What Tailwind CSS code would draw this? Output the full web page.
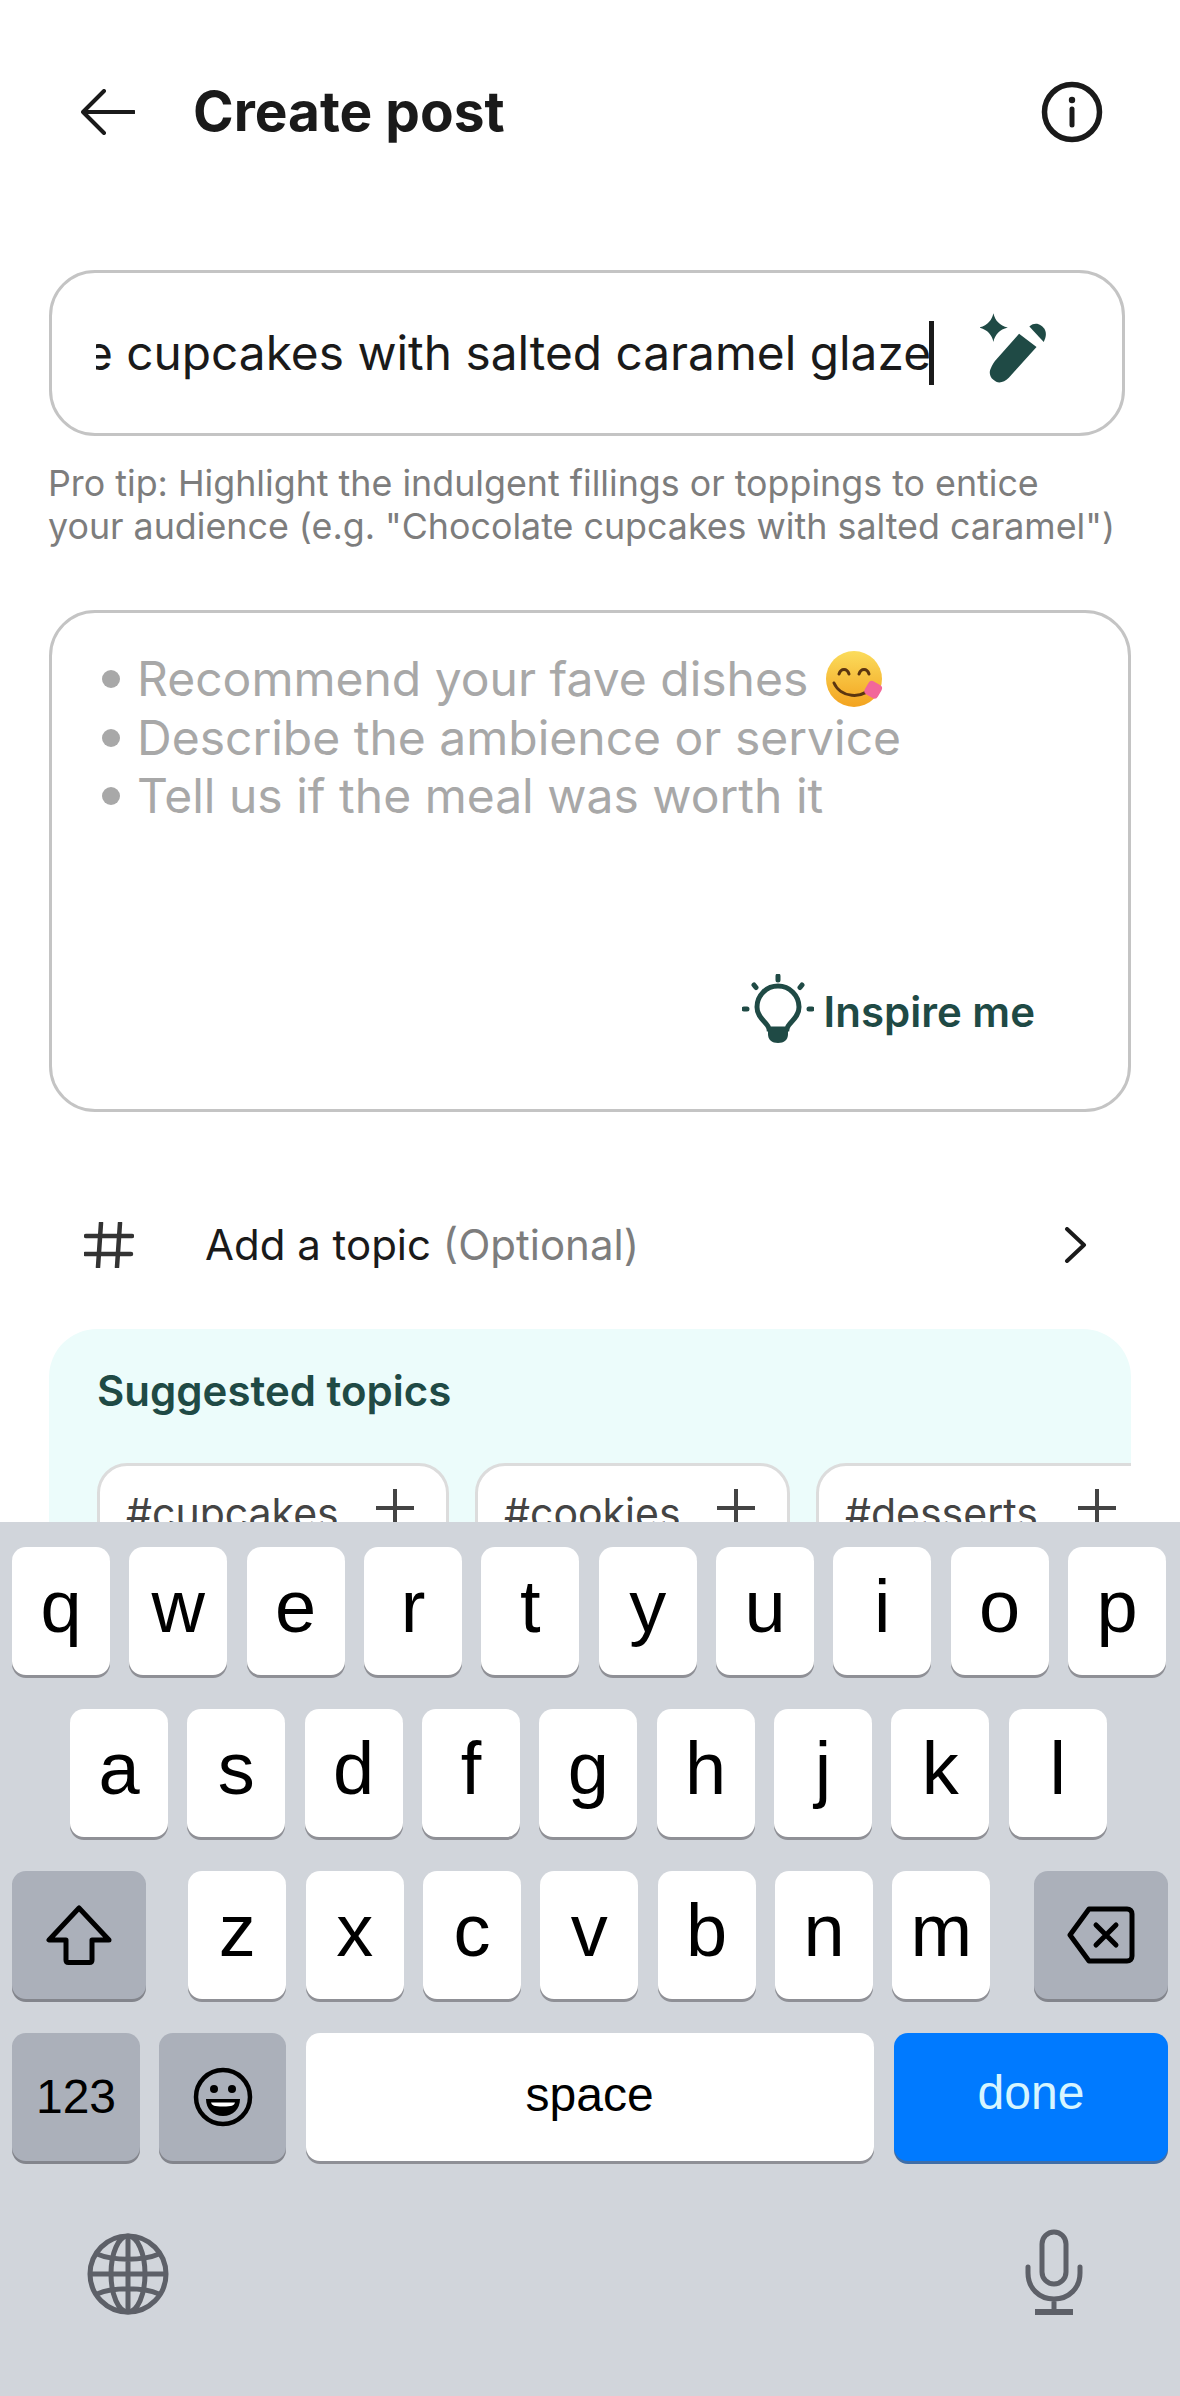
<!DOCTYPE html>
<html lang="en">
<head>
  <meta charset="UTF-8">
  <title>Create post</title>
  <script src="https://cdn.jsdelivr.net/npm/@tailwindcss/browser@4"></script>
</head>
<body class="bg-white font-['Inter',sans-serif]">
  <div class="w-[1180px] h-[2396px] flex flex-col overflow-hidden">
    <!-- page -->
    <div class="h-[1522px] overflow-hidden shrink-0">
      <header class="h-[225px] pl-[81px] pr-[77px] pb-[1px] flex items-center">
        <svg class="w-[54px] h-[46px]" viewBox="0 0 54 46" fill="none" stroke="#1a1a1a" stroke-width="4" stroke-linecap="round" stroke-linejoin="round"><path d="M53 23H2M23 2 2 23l21 21"/></svg>
        <h1 class="ml-[58px] mb-[3px] text-[55px] leading-[60px] font-bold text-[#1a1a1a]">Create post</h1>
        <svg class="ml-auto w-[62px] h-[62px]" viewBox="0 0 62 62" fill="none" stroke="#1a1a1a"><circle cx="31" cy="31" r="27.5" stroke-width="5.5"/><path d="M31 28v16" stroke-width="5" stroke-linecap="round"/><circle cx="31" cy="19" r="3.2" fill="#1a1a1a" stroke="none"/></svg>
      </header>

      <div class="mx-[49px] w-[1076px] h-[166px] mt-[45px] border-[3px] border-[#c4c4c4] rounded-[46px] pl-[44px] flex items-center">
        <div class="w-[835px] flex justify-end overflow-hidden whitespace-nowrap text-[47.800px] leading-[60px] text-[#1a1a1a]">Chocolate cupcakes with salted caramel glaze</div>
        <span class="w-[5px] h-[64px] bg-[#1a1a1a] -ml-[2px]"></span>
        <svg class="ml-[46px] w-[72px] h-[77px] mt-[-14px]" viewBox="0 0 70 75" fill="#1f4a45"><path d="M13 5c1.500 7 6 12 14 14-8 2-12.500 7-14 14-1.500-7-6-12-14-14 8-2 12.500-7 14-14Z"/><path d="M48 18c6-5 12-2 15 3 2 4 1 8-1 12Z"/><path d="M38 25 55 38 28 68c-5 5-11 6-15 2-4-3-4-8-3-10 2-5 4-8 6-10Z"/></svg>
      </div>

      <p class="ml-[48px] mt-[26px] w-[1100px] text-[35.800px] leading-[43px] text-[#7d7d7d]">Pro tip: Highlight the indulgent fillings or toppings to entice<br>your audience (e.g. "Chocolate cupcakes with salted caramel")</p>

      <div class="ml-[49px] mt-[62px] w-[1082px] h-[502px] border-[3px] border-[#c4c4c4] rounded-[46px] pl-[50px] pr-[93px] pt-[36px] flex flex-col">
        <ul class="text-[48px] leading-[58px] text-[#a8a8a8]">
          <li class="flex items-center gap-[17px]"><span class="w-[18px] h-[18px] rounded-full bg-[#a8a8a8]"></span>Recommend your fave dishes
            <svg class="ml-[-1px] w-[60px] h-[60px]" viewBox="0 0 60 60"><defs><linearGradient id="face" x1="0" y1="0" x2="0" y2="1"><stop offset="0" stop-color="#fbdc5c"/><stop offset="1" stop-color="#f3a31f"/></linearGradient></defs><circle cx="30" cy="30" r="28" fill="url(#face)"/><path d="M15 25c2-6 8-6 10 0M35 25c2-6 8-6 10 0M10 34c6 14 28 18 40 2" fill="none" stroke="#5b3510" stroke-width="3" stroke-linecap="round"/><rect x="42" y="33" width="15" height="15" rx="4" transform="rotate(30 49 40)" fill="#f2679a"/></svg>
          </li>
          <li class="flex items-center gap-[17px]"><span class="w-[18px] h-[18px] rounded-full bg-[#a8a8a8]"></span>Describe the ambience or service</li>
          <li class="flex items-center gap-[17px]"><span class="w-[18px] h-[18px] rounded-full bg-[#a8a8a8]"></span>Tell us if the meal was worth it</li>
        </ul>
        <div class="mt-auto mb-[63px] self-end flex items-center gap-[10px] text-[42px] leading-[50px] font-semibold text-[#1f4a45]">
          <svg class="w-[72px] h-[72px] -mt-[4px]" viewBox="0 0 72 72" fill="none" stroke="#1f4a45" stroke-linecap="round"><path d="M27 55c-1-7-12-10-12-22a21 21 0 0 1 42 0c0 12-11 15-12 22Z" stroke-width="5"/><path d="M26 54h20v6c0 6-4 9-10 9s-10-3-10-9Z" fill="#1f4a45" stroke="none"/><path d="M36 2v4M12 11l2 2.500M60 11l-2 2.500M2 35h3M67 35h3" stroke-width="5"/></svg>
          Inspire me
        </div>
      </div>

      <div class="h-[217px] pl-[84px] pr-[93px] pt-[48px] flex items-center text-[42px] text-[#1a1a1a]">
        <svg class="w-[50px] h-[46px]" viewBox="0 0 50 46" fill="none" stroke="#333" stroke-width="4.500" stroke-linecap="round"><path d="M2 14h46M1 32h46M17 1l-3 44M36 1l-3 44"/></svg>
        <span class="ml-[71px]">Add a topic <span class="text-[#7d7d7d]">(Optional)</span></span>
        <svg class="ml-auto w-[24px] h-[36px]" viewBox="0 0 24 36" fill="none" stroke="#1a1a1a" stroke-width="4" stroke-linecap="round" stroke-linejoin="round"><path d="m4 2 17 16L4 34"/></svg>
      </div>

      <section class="ml-[49px] w-[1082px] h-[400px] bg-[#ecfcfb] rounded-[48px] pl-[48px] pt-[36px] overflow-hidden">
        <h2 class="text-[42px] leading-[52px] font-semibold text-[#1f4a45]">Suggested topics</h2>
        <div class="mt-[46px] flex gap-[26px] text-[41px] leading-[50px] text-[#444]">
          <div class="w-[352px] h-[120px] shrink-0 bg-white border-[3px] border-[#dcdcdc] rounded-[30px] pl-[26px] pr-[32px] pt-[22px] flex justify-between"><span>#cupcakes</span><svg class="w-[38px] h-[38px] mt-[1px]" viewBox="0 0 38 38" stroke="#444" stroke-width="4"><path d="M19 0v38M0 19h38"/></svg></div>
          <div class="w-[315px] h-[120px] shrink-0 bg-white border-[3px] border-[#dcdcdc] rounded-[30px] pl-[26px] pr-[32px] pt-[22px] flex justify-between"><span>#cookies</span><svg class="w-[38px] h-[38px] mt-[1px]" viewBox="0 0 38 38" stroke="#444" stroke-width="4"><path d="M19 0v38M0 19h38"/></svg></div>
          <div class="w-[360px] h-[120px] shrink-0 bg-white border-[3px] border-[#dcdcdc] rounded-[30px] pl-[26px] pr-[57px] pt-[22px] flex justify-between"><span>#desserts</span><svg class="w-[38px] h-[38px] mt-[1px]" viewBox="0 0 38 38" stroke="#444" stroke-width="4"><path d="M19 0v38M0 19h38"/></svg></div>
        </div>
      </section>
    </div>

    <!-- keyboard -->
    <div class="flex-1 bg-[#d1d5db] pt-[25px] px-[12px] flex flex-col gap-[34px] font-['Liberation_Sans',sans-serif] text-black">
      <div class="flex gap-[19.330px]">
        <div class="w-[98px] h-[128px] bg-white rounded-[14px] shadow-[0_3px_0_#8f9096] flex items-center justify-center text-[74px] pb-[10px]">q</div>
        <div class="w-[98px] h-[128px] bg-white rounded-[14px] shadow-[0_3px_0_#8f9096] flex items-center justify-center text-[74px] pb-[10px]">w</div>
        <div class="w-[98px] h-[128px] bg-white rounded-[14px] shadow-[0_3px_0_#8f9096] flex items-center justify-center text-[74px] pb-[10px]">e</div>
        <div class="w-[98px] h-[128px] bg-white rounded-[14px] shadow-[0_3px_0_#8f9096] flex items-center justify-center text-[74px] pb-[10px]">r</div>
        <div class="w-[98px] h-[128px] bg-white rounded-[14px] shadow-[0_3px_0_#8f9096] flex items-center justify-center text-[74px] pb-[10px]">t</div>
        <div class="w-[98px] h-[128px] bg-white rounded-[14px] shadow-[0_3px_0_#8f9096] flex items-center justify-center text-[74px] pb-[10px]">y</div>
        <div class="w-[98px] h-[128px] bg-white rounded-[14px] shadow-[0_3px_0_#8f9096] flex items-center justify-center text-[74px] pb-[10px]">u</div>
        <div class="w-[98px] h-[128px] bg-white rounded-[14px] shadow-[0_3px_0_#8f9096] flex items-center justify-center text-[74px] pb-[10px]">i</div>
        <div class="w-[98px] h-[128px] bg-white rounded-[14px] shadow-[0_3px_0_#8f9096] flex items-center justify-center text-[74px] pb-[10px]">o</div>
        <div class="w-[98px] h-[128px] bg-white rounded-[14px] shadow-[0_3px_0_#8f9096] flex items-center justify-center text-[74px] pb-[10px]">p</div>
      </div>
      <div class="flex gap-[19.330px] pl-[58px]">
        <div class="w-[98px] h-[128px] bg-white rounded-[14px] shadow-[0_3px_0_#8f9096] flex items-center justify-center text-[74px] pb-[10px]">a</div>
        <div class="w-[98px] h-[128px] bg-white rounded-[14px] shadow-[0_3px_0_#8f9096] flex items-center justify-center text-[74px] pb-[10px]">s</div>
        <div class="w-[98px] h-[128px] bg-white rounded-[14px] shadow-[0_3px_0_#8f9096] flex items-center justify-center text-[74px] pb-[10px]">d</div>
        <div class="w-[98px] h-[128px] bg-white rounded-[14px] shadow-[0_3px_0_#8f9096] flex items-center justify-center text-[74px] pb-[10px]">f</div>
        <div class="w-[98px] h-[128px] bg-white rounded-[14px] shadow-[0_3px_0_#8f9096] flex items-center justify-center text-[74px] pb-[10px]">g</div>
        <div class="w-[98px] h-[128px] bg-white rounded-[14px] shadow-[0_3px_0_#8f9096] flex items-center justify-center text-[74px] pb-[10px]">h</div>
        <div class="w-[98px] h-[128px] bg-white rounded-[14px] shadow-[0_3px_0_#8f9096] flex items-center justify-center text-[74px] pb-[10px]">j</div>
        <div class="w-[98px] h-[128px] bg-white rounded-[14px] shadow-[0_3px_0_#8f9096] flex items-center justify-center text-[74px] pb-[10px]">k</div>
        <div class="w-[98px] h-[128px] bg-white rounded-[14px] shadow-[0_3px_0_#8f9096] flex items-center justify-center text-[74px] pb-[10px]">l</div>
      </div>
      <div class="flex gap-[19.330px]">
        <div class="w-[134px] h-[128px] mr-[23px] bg-[#abb0ba] rounded-[14px] shadow-[0_3px_0_#83858c] flex items-center justify-center">
          <svg class="w-[66px] h-[60px]" viewBox="0 0 66 60" fill="none" stroke="#000" stroke-width="5" stroke-linejoin="round"><path d="M33 3 3 35h17v20c0 1.500 1 2.500 2.500 2.500h21c1.500 0 2.500-1 2.500-2.500V35h17Z"/></svg>
        </div>
        <div class="w-[98px] h-[128px] bg-white rounded-[14px] shadow-[0_3px_0_#8f9096] flex items-center justify-center text-[74px] pb-[10px]">z</div>
        <div class="w-[98px] h-[128px] bg-white rounded-[14px] shadow-[0_3px_0_#8f9096] flex items-center justify-center text-[74px] pb-[10px]">x</div>
        <div class="w-[98px] h-[128px] bg-white rounded-[14px] shadow-[0_3px_0_#8f9096] flex items-center justify-center text-[74px] pb-[10px]">c</div>
        <div class="w-[98px] h-[128px] bg-white rounded-[14px] shadow-[0_3px_0_#8f9096] flex items-center justify-center text-[74px] pb-[10px]">v</div>
        <div class="w-[98px] h-[128px] bg-white rounded-[14px] shadow-[0_3px_0_#8f9096] flex items-center justify-center text-[74px] pb-[10px]">b</div>
        <div class="w-[98px] h-[128px] bg-white rounded-[14px] shadow-[0_3px_0_#8f9096] flex items-center justify-center text-[74px] pb-[10px]">n</div>
        <div class="w-[98px] h-[128px] bg-white rounded-[14px] shadow-[0_3px_0_#8f9096] flex items-center justify-center text-[74px] pb-[10px]">m</div>
        <div class="ml-auto w-[134px] h-[128px] bg-[#abb0ba] rounded-[14px] shadow-[0_3px_0_#83858c] flex items-center justify-center">
          <svg class="w-[68px] h-[58px]" viewBox="0 0 68 58" fill="none" stroke="#000" stroke-width="5" stroke-linecap="round" stroke-linejoin="round"><path d="M22 3h38c3 0 5 2 5 5v42c0 3-2 5-5 5H22L3 29Z"/><path d="m29 19 20 20M49 19 29 39"/></svg>
        </div>
      </div>
      <div class="flex gap-[19.330px] text-[48px]">
        <div class="w-[128px] h-[128px] bg-[#abb0ba] rounded-[14px] shadow-[0_3px_0_#83858c] flex items-center justify-center">123</div>
        <div class="w-[127px] h-[128px] bg-[#abb0ba] rounded-[14px] shadow-[0_3px_0_#83858c] flex items-center justify-center">
          <svg class="w-[60px] h-[60px]" viewBox="0 0 60 60" fill="none" stroke="#000" stroke-width="4.500"><circle cx="30" cy="30" r="27"/><circle cx="21" cy="22" r="4" fill="#000" stroke="none"/><circle cx="39" cy="22" r="4" fill="#000" stroke="none"/><path d="M13 32h34c0 10-7 17-17 17S13 42 13 32Z" fill="#000" stroke="none"/><path d="M18 35.500h24c-1 3-3 4-12 4s-11-1-12-4Z" fill="#fff" stroke="none"/></svg>
        </div>
        <div class="w-[568px] h-[128px] bg-white rounded-[14px] shadow-[0_3px_0_#8f9096] flex items-center justify-center pb-[4px]">space</div>
        <div class="ml-auto w-[274px] h-[128px] bg-[#007aff] rounded-[14px] shadow-[0_3px_0_#3f6ea8] flex items-center justify-center pb-[8px] text-[#d6f5ff]">done</div>
      </div>
      <div class="flex justify-between pl-[75px] pr-[85px] mt-[38px]">
        <svg class="w-[82px] h-[82px]" viewBox="0 0 82 82" fill="none" stroke="#5d6068" stroke-width="5"><circle cx="41" cy="41" r="38"/><ellipse cx="41" cy="41" rx="17" ry="38"/><path d="M41 3v76M3 41h76M10 21c16 7 46 7 62 0M10 61c16-7 46-7 62 0"/></svg>
        <svg class="w-[58px] h-[86px] -mt-[4px]" viewBox="0 0 58 86" fill="none" stroke="#5d6068" stroke-width="5" stroke-linecap="round"><rect x="17" y="3" width="24" height="52" rx="12"/><path d="M3 38v6c0 15 11 26 26 26s26-11 26-26v-6M29 70v13"/><path d="M10 83h38" stroke-width="6" stroke-linecap="butt"/></svg>
      </div>
    </div>
  </div>
</body>
</html>
